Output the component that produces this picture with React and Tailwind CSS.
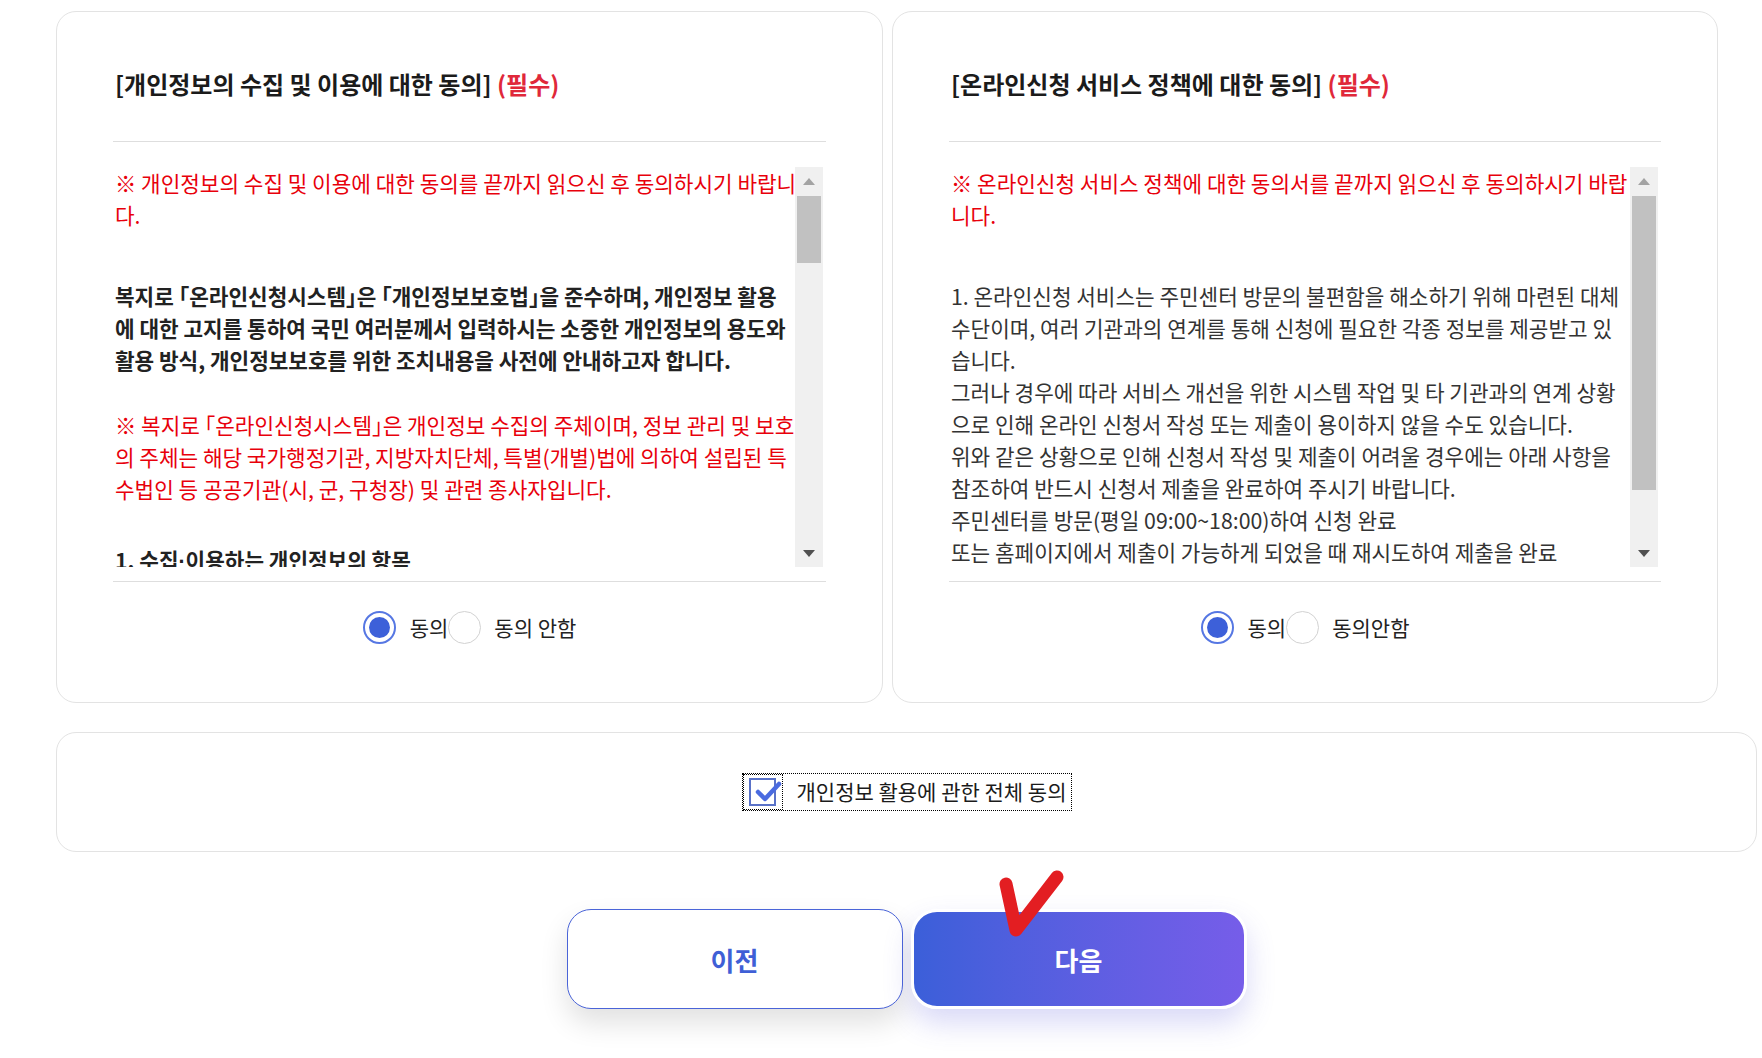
import React from 'react'

const leftNotice = ['※ 개인정보의 수집 및 이용에 대한 동의를 끝까지 읽으신 후 동의하시기 바랍니', '다.']
const leftIntro = [
  '복지로 「온라인신청시스템」은 「개인정보보호법」을 준수하며, 개인정보 활용',
  '에 대한 고지를 통하여 국민 여러분께서 입력하시는 소중한 개인정보의 용도와',
  '활용 방식, 개인정보보호를 위한 조치내용을 사전에 안내하고자 합니다.',
]
const leftSubject = [
  '※ 복지로 「온라인신청시스템」은 개인정보 수집의 주체이며, 정보 관리 및 보호',
  '의 주체는 해당 국가행정기관, 지방자치단체, 특별(개별)법에 의하여 설립된 특',
  '수법인 등 공공기관(시, 군, 구청장) 및 관련 종사자입니다.',
]

const rightNotice = ['※ 온라인신청 서비스 정책에 대한 동의서를 끝까지 읽으신 후 동의하시기 바랍', '니다.']
const rightBody = [
  '1. 온라인신청 서비스는 주민센터 방문의 불편함을 해소하기 위해 마련된 대체',
  '수단이며, 여러 기관과의 연계를 통해 신청에 필요한 각종 정보를 제공받고 있',
  '습니다.',
  '그러나 경우에 따라 서비스 개선을 위한 시스템 작업 및 타 기관과의 연계 상황',
  '으로 인해 온라인 신청서 작성 또는 제출이 용이하지 않을 수도 있습니다.',
  '위와 같은 상황으로 인해 신청서 작성 및 제출이 어려울 경우에는 아래 사항을',
  '참조하여 반드시 신청서 제출을 완료하여 주시기 바랍니다.',
  '주민센터를 방문(평일 09:00~18:00)하여 신청 완료',
  '또는 홈페이지에서 제출이 가능하게 되었을 때 재시도하여 제출을 완료',
]

const Lines = ({ lines, className = '' }) => (
  <p className={className}>
    {lines.map((l, i) => (
      <span key={i} className="block">{l}</span>
    ))}
  </p>
)

const Scrollbar = ({ thumbHeight }) => (
  <div className="w-[28px] shrink-0 bg-[#f0f0f0] flex flex-col">
    <div className="h-[28px] flex items-center justify-center">
      <svg width="12" height="7" viewBox="0 0 12 7"><polygon points="6,0 12,7 0,7" fill="#a3a3a3" /></svg>
    </div>
    <div className="mx-[2px] mt-[1px] bg-[#c1c1c1]" style={{ height: thumbHeight }} />
    <div className="flex-1" />
    <div className="h-[28px] flex items-center justify-center">
      <svg width="12" height="7" viewBox="0 0 12 7"><polygon points="0,0 12,0 6,7" fill="#505050" /></svg>
    </div>
  </div>
)

const Radio = ({ checked }) =>
  checked ? (
    <span className="w-[33px] h-[33px] shrink-0 rounded-full border-2 border-[#5677e3] bg-white flex items-center justify-center">
      <span className="w-[21px] h-[21px] rounded-full bg-[#3d60d9]" />
    </span>
  ) : (
    <span className="w-[33px] h-[33px] shrink-0 rounded-full border-[1.5px] border-[#d2d2d2] bg-white" />
  )

const AgreeCard = ({ title, width, thumbHeight, noLabel, children }) => (
  <section className={`${width} h-[692px] rounded-[20px] border border-[#e3e3e3] bg-white px-[56px]`}>
    <h2 className="pl-[2px] pt-[57px] pb-[42px] border-b border-[#dedede] text-[24px] leading-[30px] font-bold text-[#1b1b1b]">
      {title} <span className="text-[#e0283a]">(필수)</span>
    </h2>
    <div className="mt-[25px] mr-[3px] h-[400px] flex">
      <div className="flex-1 overflow-hidden pl-[2px] text-[21.3px] leading-[32px] whitespace-nowrap [font-feature-settings:'halt']">
        {children}
      </div>
      <Scrollbar thumbHeight={thumbHeight} />
    </div>
    <div className="mt-[14px] border-t border-[#dedede]" />
    <div className="mt-[29px] flex items-center justify-center text-[21px] text-[#222]">
      <Radio checked />
      <span className="ml-[14px]">동의</span>
      <Radio />
      <span className="ml-[13px]">{noLabel}</span>
    </div>
  </section>
)

export default function App() {
  return (
    <div className="min-h-screen bg-white font-['Noto_Sans_CJK_KR','Noto_Sans',sans-serif]">
      <div className="w-[1701px] ml-[56px] pt-[11px]">
        <div className="flex gap-[9px]">
          <AgreeCard title="[개인정보의 수집 및 이용에 대한 동의]" width="w-[827px]" thumbHeight={67} noLabel="동의 안함">
            <Lines lines={leftNotice} className="text-[#e8000b]" />
            <Lines lines={leftIntro} className="mt-[49px] font-bold text-[#222]" />
            <Lines lines={leftSubject} className="mt-[33px] text-[#e8000b]" />
            <p className="mt-[39px] font-bold text-[#222]">
              1. 수집<span className="font-['Liberation_Sans',sans-serif]">·</span>이용하는 개인정보의 항목
            </p>
          </AgreeCard>
          <AgreeCard title="[온라인신청 서비스 정책에 대한 동의]" width="w-[826px]" thumbHeight={294} noLabel="동의안함">
            <Lines lines={rightNotice} className="text-[#e8000b]" />
            <Lines lines={rightBody} className="mt-[49px] text-[#333]" />
          </AgreeCard>
        </div>

        <div className="mt-[29px] h-[120px] rounded-[20px] border border-[#e3e3e3] flex items-center justify-center">
          <label className="h-[38px] w-[330px] border border-dotted border-black flex items-center">
            <span className="w-[40px] h-[36px] border border-dotted border-black flex items-center justify-center">
              <span className="relative w-[27px] h-[28px] border-2 border-[#5a72c8] bg-white">
                <svg className="absolute -left-[2px] -top-[2px]" width="34" height="28" viewBox="0 0 34 28">
                  <path d="M9 14 L16 21 L30 6" fill="none" stroke="#4a6be0" strokeWidth="4.5" strokeLinecap="round" strokeLinejoin="round" />
                </svg>
              </span>
            </span>
            <span className="ml-[14px] text-[21px] text-[#1b1b1b]">개인정보 활용에 관한 전체 동의</span>
          </label>
        </div>

        <div className="mt-[57px] flex justify-center gap-[8px]">
          <button className="w-[336px] h-[100px] rounded-[24px] border border-[#4a64d8] bg-white text-[26px] font-bold text-[#3f5fd6] shadow-[0_14px_28px_rgba(0,0,0,0.12)]">
            이전
          </button>
          <div className="relative">
            <button className="w-[336px] h-[100px] rounded-[26px] border-[3px] border-white bg-linear-to-r from-[#3b5fd9] to-[#765de9] text-[26px] font-bold text-white shadow-[0_14px_28px_rgba(80,80,220,0.22)]">
              다음
            </button>
            <svg className="absolute left-[80px] -top-[45px]" width="90" height="90" viewBox="0 0 90 90">
              <path d="M15 20 L25 66 L66 13" fill="none" stroke="#e31e22" strokeWidth="13" strokeLinecap="round" strokeLinejoin="round" />
            </svg>
          </div>
        </div>
      </div>
    </div>
  )
}
